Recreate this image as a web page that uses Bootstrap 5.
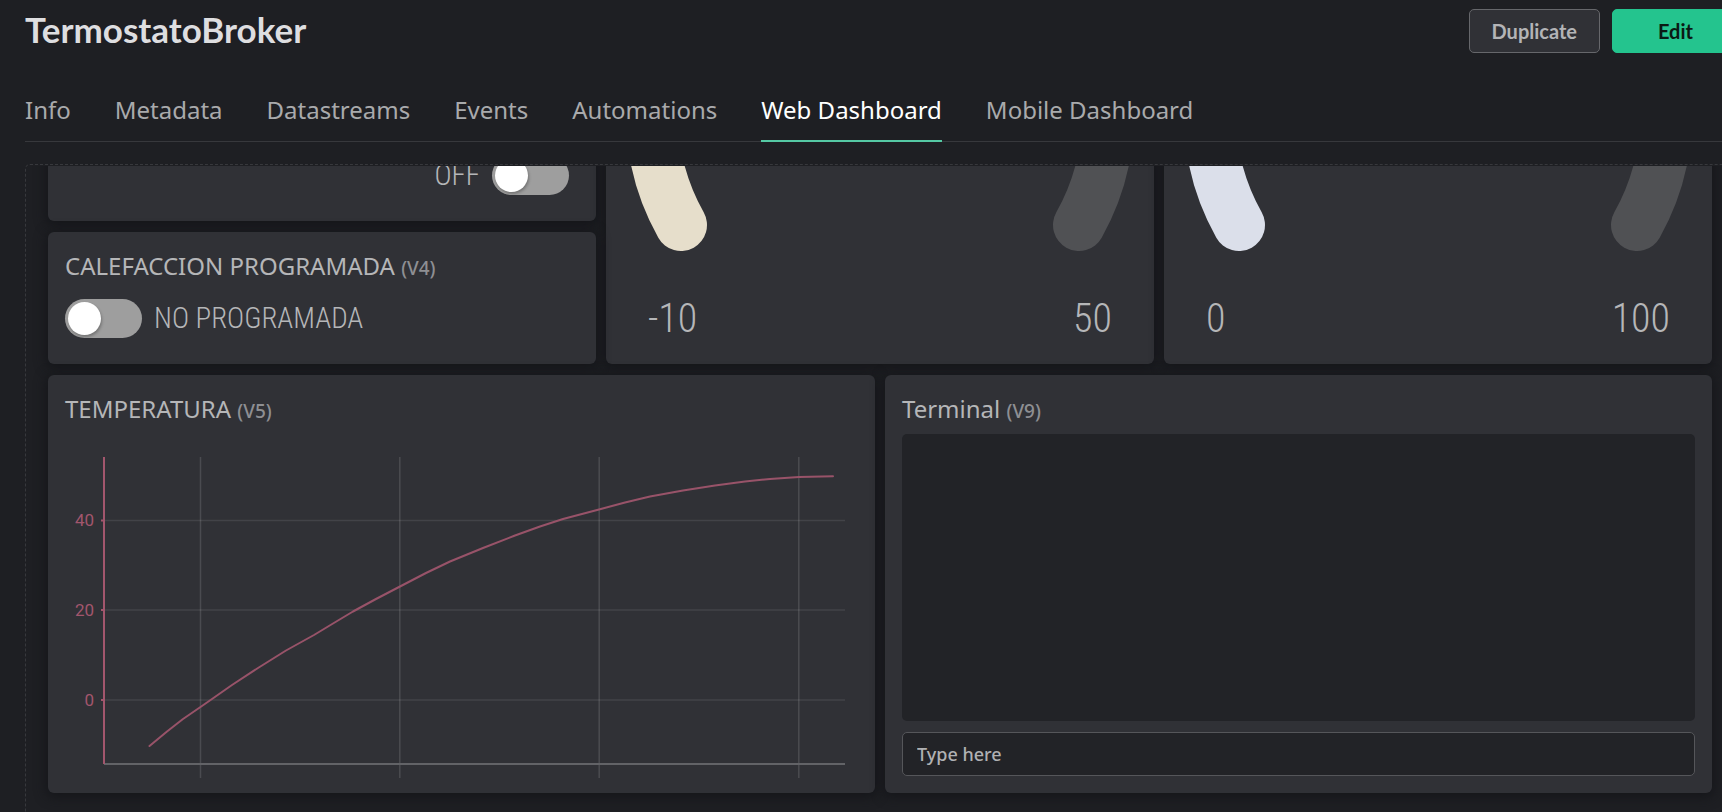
<!DOCTYPE html>
<html lang="en">
<head>
<meta charset="utf-8">
<meta name="viewport" content="width=device-width, initial-scale=1">
<title>TermostatoBroker</title>
<link href="https://cdn.jsdelivr.net/npm/bootstrap@5.3.0/dist/css/bootstrap.min.css" rel="stylesheet">
<style>
  :root {
    --page: #1e1f23; --panel: #303136; --well: #222327;
    --line: #37383c; --ink: #b5b6b8; --dim: #8e8f93; --accent: #24c48e; --series: #a2566d;
  }
  body { background: var(--page); color: var(--ink); font-family: "Noto Sans", sans-serif; overflow: hidden; }
  /* the template view is slightly wider than the window */
  .template-view { padding: 9px 0 0 25px; margin-right: -17px; }
  .template-name { font: 700 35px/40px Lato, sans-serif; color: #dedee0; }
  .action { font: 700 20px/28px Lato, sans-serif; padding: 7px 22px; border-radius: 5px; }
  .action-plain { color: #b3b4b6; background: var(--panel); border-color: #66676b; }
  .action-main { color: #0b1a14; background: var(--accent); border-color: var(--accent); min-width: 127px; }
  .tabs { gap: 44px; margin-top: 32px; border-bottom: 1px solid var(--line); }
  .tabs .nav-link { padding: 9px 0 14px; margin-bottom: -1px; font-size: 24px; line-height: 32px; color: #a9aaac; border-bottom: 2px solid transparent; }
  .tabs .nav-link.active { color: #fff; border-color: #55c9a4; }
  .board { padding-top: 1px; margin-top: 22px; border: 1px dashed var(--line); border-bottom: 0; border-radius: 5px 5px 0 0; min-height: 0; }
  .board-clip { padding: 0 26px 0 22px; }
  .widgets { display: grid; grid-template-columns: repeat(6, 1fr); gap: 11px 10px; margin-top: -77px; }
  .w-third { grid-column: span 2; } .w-half { grid-column: span 3; } .w-tall { grid-row: span 2; }
  .widget { background: var(--panel); border-radius: 6px; box-shadow: 0 2px 12px 2px #15161a; padding: 17px; min-width: 0; }
  .switch-widget { height: 132px; }
  .switch-end { padding: 0 10px 9px 0; }
  .widget-title { font-size: 24px; line-height: 34px; font-weight: 400; }
  .widget-title small { font-size: 19px; line-height: 1; font-weight: 500; color: var(--dim); }
  .switch { appearance: none; flex: none; width: 77px; height: 39px; margin: 0; padding: 3px; border-radius: 20px; background: #9e9e9e; }
  .switch::before { content: ""; display: block; width: 33px; height: 33px; border-radius: 50%; background: #fff; box-shadow: 1px 2px 3px #0004; }
  .switch:checked::before { margin-left: auto; }
  .thin { font-family: "Roboto Condensed", Roboto, sans-serif; font-weight: 300; }
  .switch-text { font-size: 29px; line-height: 39px; }
  .scale-text { font-size: 40px; line-height: 48px; padding: 0 25px; margin-top: 24px; }
  .dial { overflow: visible; margin-top: -17px; }
  .dial path { fill: none; stroke-width: 52px; stroke-linecap: round; }
  .chart { overflow: visible; }
  .chart text { font: 17px Roboto, sans-serif; fill: var(--series); text-anchor: end; }
  .output { background: var(--well); border-radius: 5px; height: 287px; }
  .command, .command:focus { background: var(--well); border: 1px solid #55565a; border-radius: 5px; color: var(--ink); font-size: 18px; font-weight: 500; line-height: 28px; padding: 7px 14px; }
  .command::placeholder { color: #b0b1b3; opacity: 1; }
</style>
</head>
<body>
<div class="template-view d-flex flex-column vh-100">
  <header class="d-flex align-items-start justify-content-between">
    <h1 class="template-name mb-0">TermostatoBroker</h1>
    <div class="d-flex gap-2">
      <button type="button" class="btn action action-plain me-1">Duplicate</button>
      <button type="button" class="btn action action-main">Edit</button>
    </div>
  </header>
  <nav class="nav tabs" aria-label="Template sections">
    <a class="nav-link" href="#info">Info</a>
    <a class="nav-link" href="#metadata">Metadata</a>
    <a class="nav-link" href="#datastreams">Datastreams</a>
    <a class="nav-link" href="#events">Events</a>
    <a class="nav-link" href="#automations">Automations</a>
    <a class="nav-link active" aria-current="page" href="#web">Web Dashboard</a>
    <a class="nav-link" href="#mobile">Mobile Dashboard</a>
  </nav>
  <main class="board flex-grow-1">
    <div class="board-clip h-100 overflow-hidden">
      <div class="widgets">
        <section class="widget switch-widget w-third d-flex align-items-end justify-content-end">
          <div class="switch-end d-flex align-items-center gap-2">
            <label class="thin switch-text me-1" for="sw1">OFF</label>
            <input class="switch" type="checkbox" role="switch" id="sw1">
          </div>
        </section>
        <section class="widget w-third w-tall">
          <svg class="dial d-block w-100" viewBox="0 0 514 182" aria-hidden="true">
            <path stroke="#505154" d="M257 -205A229 229 0 0 1 456 136"/>
            <path stroke="#e6decb" d="M257 -205A229 229 0 0 0 58 136"/>
          </svg>
          <div class="thin scale-text d-flex justify-content-between"><span>-10</span><span>50</span></div>
        </section>
        <section class="widget w-third w-tall">
          <svg class="dial d-block w-100" viewBox="0 0 514 182" aria-hidden="true">
            <path stroke="#505154" d="M257 -205A229 229 0 0 1 456 136"/>
            <path stroke="#dbdfea" d="M257 -205A229 229 0 0 0 58 136"/>
          </svg>
          <div class="thin scale-text d-flex justify-content-between"><span>0</span><span>100</span></div>
        </section>
        <section class="widget switch-widget w-third">
          <h2 class="widget-title mb-3">CALEFACCION PROGRAMADA <small>(V4)</small></h2>
          <div class="d-flex align-items-center gap-2">
            <input class="switch me-1" type="checkbox" role="switch" id="sw2">
            <label class="thin switch-text" for="sw2">NO PROGRAMADA</label>
          </div>
        </section>
        <section class="widget w-half">
          <h2 class="widget-title mb-3">TEMPERATURA <small>(V5)</small></h2>
          <svg class="chart d-block w-100" viewBox="0 2 793 334" role="img" aria-label="Temperatura">
            <g stroke="#fff" stroke-opacity=".09" stroke-width="1.5">
              <path d="M39 80.5H780M39 170H780M39 260H780"/>
              <path stroke-opacity=".13" d="M135.5 17V338M334.8 17V338M534.2 17V338M733.8 17V338"/>
            </g>
            <path stroke="#626367" stroke-width="2" d="M39 324H780"/>
            <path stroke="#a2566d" stroke-width="2" fill="none" d="M39 17V324M36 80.5H39M36 170H39M36 260H39"/>
            <polyline fill="none" stroke="#985369" stroke-width="2" stroke-linejoin="round" stroke-linecap="round" points="84.500,306 102,291.500 118,279 135.500,267 147,259 167,245 193,228 221,210.500 249,195 268,183.500 288,171.500 311,159 335,146.500 361,133 385,121.500 418,108 450,95.500 475,86.500 498,79 534,69.500 560,62.500 585,56.500 618,50.500 650,45.500 680,41.500 705,39 734,37 768,36.300"/>
            <text x="29" y="86">40</text><text x="29" y="176">20</text><text x="29" y="266">0</text>
          </svg>
        </section>
        <section class="widget w-half d-flex flex-column">
          <h2 class="widget-title mb-2">Terminal <small>(V9)</small></h2>
          <div class="output" role="log"></div>
          <input class="form-control command mt-auto" type="text" placeholder="Type here" aria-label="Terminal command">
        </section>
      </div>
    </div>
  </main>
</div>
<script src="https://cdn.jsdelivr.net/npm/bootstrap@5.3.0/dist/js/bootstrap.bundle.min.js"></script>
</body>
</html>
